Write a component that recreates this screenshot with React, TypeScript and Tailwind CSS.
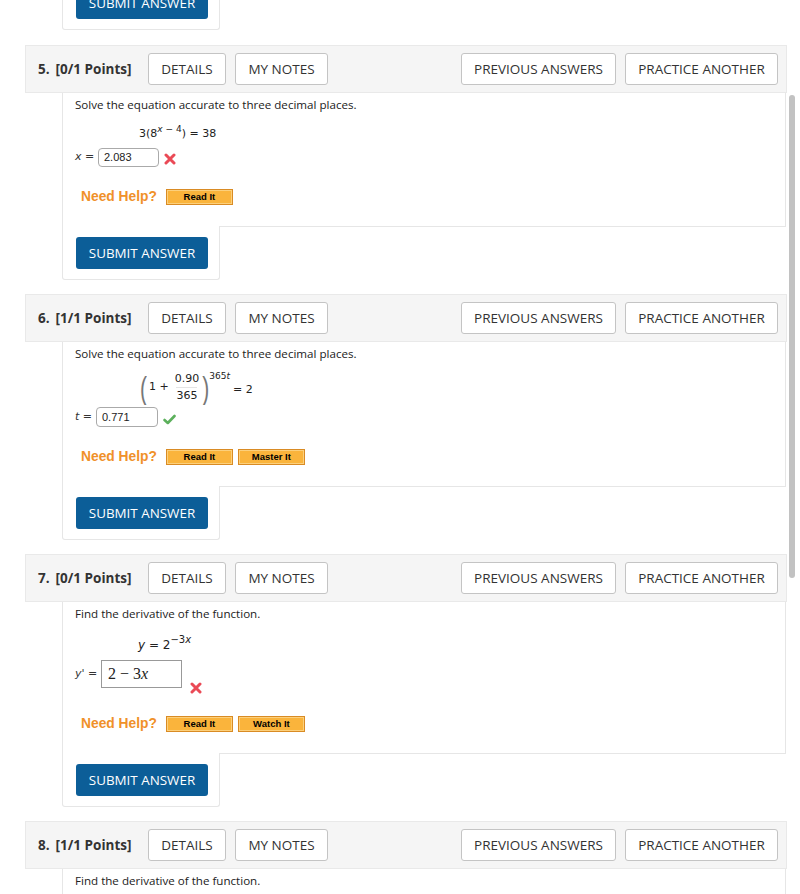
import React from "react";

const math = "font-['DejaVu_Sans',Verdana,sans-serif]";
const arial = "font-['Liberation_Sans',Arial,sans-serif]";

function WrongMark() {
  return (
    <svg width="12" height="12" viewBox="0 0 12 12" className="shrink-0">
      <path d="M2 2 L10 10 M10 2 L2 10" stroke="#ea4a56" strokeWidth="3" strokeLinecap="round" fill="none" />
    </svg>
  );
}

function RightMark() {
  return (
    <svg width="13" height="11" viewBox="0 0 13 11" className="shrink-0">
      <path d="M1.5 6 L4.8 9 L11.5 2" stroke="#5cb05c" strokeWidth="2.6" strokeLinecap="round" strokeLinejoin="round" fill="none" />
    </svg>
  );
}

function HelpBtn({ label }: { label: string }) {
  return (
    <span
      className={`inline-flex h-[16px] w-[67px] items-center justify-center border border-[#d98b24] bg-[#fab43c] text-[9.5px] font-bold text-black shadow-[inset_0_0_0_1px_#fcd07c] ${arial}`}
    >
      {label}
    </span>
  );
}

function NeedHelp({ buttons }: { buttons: string[] }) {
  return (
    <div className="ml-[6px] flex h-[16px] items-center">
      <span className={`mr-[9px] text-[13.8px] font-bold text-[#f0912a] ${arial}`}>Need Help?</span>
      <div className="flex gap-[5px]">
        {buttons.map((b) => (
          <HelpBtn key={b} label={b} />
        ))}
      </div>
    </div>
  );
}

function SubmitBox({ first = false }: { first?: boolean }) {
  return (
    <div
      className={`relative ${first ? "-mt-[24px]" : "-mt-px"} ml-[37px] w-[158px] rounded-b-[3px] border-x border-b border-[#e6e6e6] bg-white pl-[13px] pt-[11px] pb-[10px]`}
    >
      <div className="flex h-[32px] w-[132px] items-center justify-center rounded-[3px] bg-[#0c5e98] text-[13.4px] uppercase text-white">
        Submit Answer
      </div>
    </div>
  );
}

function HeadBtn({ label, w }: { label: string; w: string }) {
  return (
    <div
      className={`flex h-[32px] items-center justify-center rounded-[3px] border border-[#c4c4c4] bg-white text-[13.5px] uppercase text-[#333] ${w}`}
    >
      {label}
    </div>
  );
}

function Header({ n, pts, className = "" }: { n: number; pts: string; className?: string }) {
  return (
    <div
      className={`flex h-[48px] items-center border border-[#e9e9e9] bg-[#f5f5f5] pl-[12px] pr-[8px] ${className}`}
    >
      <div className="w-[110px] text-[13.5px] font-bold text-[#333]">
        <span className="mr-[6px]">{n}.</span>[{pts} Points]
      </div>
      <HeadBtn label="Details" w="w-[78px]" />
      <HeadBtn label="My Notes" w="ml-[9px] w-[93px]" />
      <div className="flex-1" />
      <HeadBtn label="Previous Answers" w="w-[155px]" />
      <HeadBtn label="Practice Another" w="ml-[9px] w-[153px]" />
    </div>
  );
}

function Body({ children }: { children: React.ReactNode }) {
  return (
    <div className="ml-[37px] mr-px border-x border-b border-[#e6e6e6] bg-white pl-[12px] pt-[4px] pb-[21px]">
      {children}
    </div>
  );
}

function Prompt({ text }: { text: string }) {
  return <div className="h-[16px] text-[11.6px] leading-[16px] text-[#222]">{text}</div>;
}

function Paren({ ch }: { ch: string }) {
  return (
    <span className={`inline-block scale-y-[1.5] text-[21px] font-light leading-none text-[#777] ${arial}`}>
      {ch}
    </span>
  );
}

export default function App() {
  return (
    <div className="relative h-[894px] w-[800px] overflow-hidden bg-white font-['Open_Sans',sans-serif]">
      <div className="w-[787px] pl-[25px]">
        <SubmitBox first />

        {/* question 5 */}
        <Header n={5} pts="0/1" className="mt-[15px]" />
        <Body>
          <Prompt text="Solve the equation accurate to three decimal places." />
          <div className={`ml-[64px] mt-[13px] h-[16px] text-[11px] leading-[16px] text-[#222] ${math}`}>
            3(8
            <span className="relative -top-[5px] text-[9px]">
              <i>x</i> − 4
            </span>
            ) = 38
          </div>
          <div className="mt-[6px] flex h-[19px] items-center">
            <span className={`w-[23px] text-[11px] text-[#333] ${math}`}>
              <i>x</i> =
            </span>
            <div className={`flex h-[19px] w-[61px] items-center rounded-[4px] border border-[#aaa] pl-[5px] text-[11px] text-[#222] ${arial}`}>
              2.083
            </div>
            <span className="ml-[5px] mt-[2px]">
              <WrongMark />
            </span>
          </div>
          <div className="mt-[22px]">
            <NeedHelp buttons={["Read It"]} />
          </div>
        </Body>
        <SubmitBox />

        {/* question 6 */}
        <Header n={6} pts="1/1" className="mt-[14px]" />
        <Body>
          <Prompt text="Solve the equation accurate to three decimal places." />
          <div className={`ml-[65px] mt-[9px] flex h-[32px] items-center text-[11px] text-[#222] ${math}`}>
            <Paren ch="(" />
            <span className="ml-[2px]">1 +</span>
            <span className="ml-[6px] mr-[3px] flex flex-col items-center leading-[16px]">
              <span>0.90</span>
              <span className="border-t border-[#e4e4e4]">365</span>
            </span>
            <Paren ch=")" />
            <span className="self-start mt-[1px] text-[9px] leading-none">
              365<i>t</i>
            </span>
            <span className="ml-[3px] mt-[6px]">= 2</span>
          </div>
          <div className="mt-[4px] flex h-[20px] items-center">
            <span className={`w-[21px] text-[11px] text-[#333] ${math}`}>
              <i>t</i> =
            </span>
            <div className={`flex h-[20px] w-[62px] items-center rounded-[4px] border border-[#aaa] pl-[5px] text-[11px] text-[#222] ${arial}`}>
              0.771
            </div>
            <span className="ml-[5px] mt-[4px]">
              <RightMark />
            </span>
          </div>
          <div className="mt-[22px]">
            <NeedHelp buttons={["Read It", "Master It"]} />
          </div>
        </Body>
        <SubmitBox />

        {/* question 7 */}
        <Header n={7} pts="0/1" className="mt-[14px]" />
        <Body>
          <Prompt text="Find the derivative of the function." />
          <div className={`ml-[63px] mt-[15px] h-[16px] text-[12px] leading-[16px] text-[#222] ${math}`}>
            <i>y</i> = 2
            <span className="relative -top-[6px] text-[10px]">−3<i>x</i></span>
          </div>
          <div className="mt-[7px] flex h-[28px] items-center">
            <span className={`w-[26px] text-[11px] text-[#333] ${math}`}>
              <i>y</i>' =
            </span>
            <div className="flex h-[28px] w-[81px] items-center border border-[#999] pl-[6px] font-['Liberation_Serif',serif] text-[16px] text-[#222]">
              2 − 3<i>x</i>
            </div>
            <span className="relative top-[14px] ml-[8px]">
              <WrongMark />
            </span>
          </div>
          <div className="mt-[28px]">
            <NeedHelp buttons={["Read It", "Watch It"]} />
          </div>
        </Body>
        <SubmitBox />

        {/* question 8 */}
        <Header n={8} pts="1/1" className="mt-[14px]" />
        <Body>
          <Prompt text="Find the derivative of the function." />
          <div className="h-[40px]" />
        </Body>
      </div>

      <div className="absolute left-[789px] top-[95px] h-[483px] w-[6px] rounded-full bg-[#c2c2c2]" />
    </div>
  );
}
